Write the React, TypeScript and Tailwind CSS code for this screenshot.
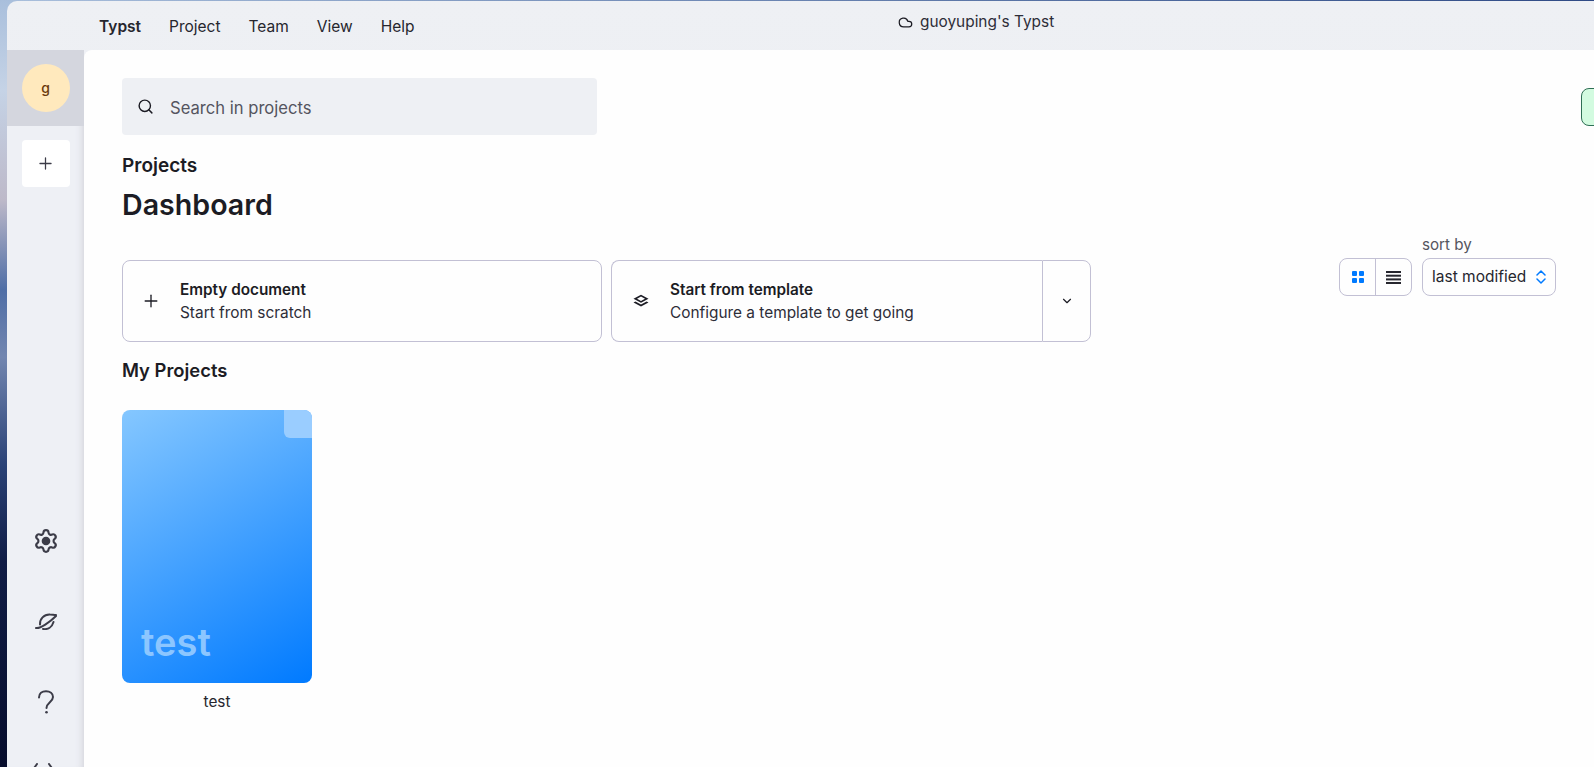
import { ChevronDown, Cloud, Plus, Search, Settings } from 'lucide-react';

const font = { fontFamily: 'Inter, sans-serif' };

function Card({ icon, title, sub, className }: { icon: React.ReactNode; title: string; sub: string; className: string }) {
  return (
    <div className={`flex items-center h-[82px] rounded-lg border border-[#c2c0d4] ${className}`}>
      <div className="w-[16px] flex justify-center mr-[21px]">{icon}</div>
      <div>
        <div className="text-[15.3px] leading-[23px] font-semibold text-[#1c1c24]">{title}</div>
        <div className="text-[15.4px] leading-[23px] text-[#2d2d38]">{sub}</div>
      </div>
    </div>
  );
}

function LayersIcon() {
  return (
    <svg width="16" height="16" viewBox="0 0 16 16" fill="#1c1c24">
      <path d="M8 1.800 15.500 5.800 8 9.800 .5 5.800ZM8 3.600 4 5.800 8 8 12 5.800Z" fillRule="evenodd" />
      <path d="M2.400 8.400 8 11.400l5.600-3L15.500 9.500 8 13.500 .5 9.500Z" />
    </svg>
  );
}

function GridIcon() {
  return (
    <svg width="12" height="12" viewBox="0 0 12 12" fill="#007aff">
      <rect width="5" height="5" rx="1" />
      <rect x="7" width="5" height="5" rx="1" />
      <rect y="7" width="5" height="5" rx="1" />
      <rect x="7" y="7" width="5" height="5" rx="1" />
    </svg>
  );
}

function ListIcon() {
  return (
    <svg width="15" height="13" viewBox="0 0 15 13" fill="#26262e">
      <rect width="15" height="2" />
      <rect y="3.700" width="15" height="2" />
      <rect y="7.400" width="15" height="2" />
      <rect y="11" width="15" height="2" />
    </svg>
  );
}

function SortIcon() {
  return (
    <svg width="10" height="14" viewBox="0 0 10 14" fill="none" stroke="#007aff" strokeWidth="1.500" strokeLinecap="round" strokeLinejoin="round">
      <path d="M1 5 5 1l4 4" />
      <path d="M1 9l4 4 4-4" />
    </svg>
  );
}

function PlanetIcon() {
  return (
    <svg width="22" height="17" viewBox="0 0 22 17" fill="none" stroke="#3c3c48" strokeWidth="2" strokeLinecap="round" className="shrink-0 mt-[59px]">
      <path d="M1 15c4 1 14-6 20-12" />
      <path d="M5 11.500C4.500 6 9 1.200 15 1.500c2 0 4 .5 6 .5" />
      <path d="M8 16c5 .8 9-2 10.500-7" />
    </svg>
  );
}

function HelpIcon() {
  return (
    <svg width="18" height="24" viewBox="0 0 18 24" fill="none" stroke="#3c3c48" strokeWidth="2" strokeLinecap="round" className="shrink-0 mt-[60px]">
      <path d="M2 7.500C2 3.500 5 1.200 9 1.200s7 2.400 7 5.800c0 5-6.500 5.500-6.500 11" />
      <circle cx="9.500" cy="22.300" r="1.300" fill="#3c3c48" stroke="none" />
    </svg>
  );
}

function CodeIcon() {
  return (
    <svg width="24" height="16" viewBox="0 0 24 16" fill="none" stroke="#3c3c48" strokeWidth="2" strokeLinecap="round" strokeLinejoin="round" className="shrink-0 mt-[49px] -ml-[6px]">
      <path d="M6 1 1 8l5 7" />
      <path d="M18 1l5 7-5 7" />
    </svg>
  );
}

export default function App() {
  return (
    <div
      style={font}
      className="relative h-[767px] w-[1594px] overflow-hidden flex bg-[linear-gradient(180deg,#a9bfdc_0px,#c5d3e6_90px,#bdb9c9_200px,#4f6ea6_290px,#7286b0_357px,#2a4276_465px,#101c45_562px,#060c2c_767px)]"
    >
      <div className="absolute inset-x-0 top-0 h-[1px] bg-gradient-to-r from-[#a9bfdc] to-[#2f4a85]" />
      <div className="w-[7px] shrink-0" />
      <div className="flex-1 min-w-0 flex flex-col mt-[1px] rounded-tl-[10px] bg-gradient-to-b from-[#eef0f4] to-[#e9eaef] overflow-hidden">
        <header className="relative h-[49px] shrink-0 flex items-center pl-[92px] pt-[2px] text-[15.500px] text-[#26262e]">
          <span className="font-semibold mr-[28px]">Typst</span>
          <span className="mr-[28px]">Project</span>
          <span className="mr-[28px]">Team</span>
          <span className="mr-[28px]">View</span>
          <span>Help</span>
          <div className="absolute left-[891px] top-[11px] flex items-center gap-[7px] text-[15.400px] leading-[20px] text-[#2d2d38]">
            <Cloud size={15} strokeWidth={2} className="text-[#1c1c24]" />
            guoyuping's Typst
          </div>
        </header>
        <div className="flex-1 min-h-0 flex bg-[#eef0f5]">
          <aside className="w-[77px] shrink-0 flex flex-col items-center overflow-hidden shadow-[inset_-8px_0_8px_-8px_#c8c8d0]">
            <div className="shrink-0 w-full h-[76px] flex items-center justify-center bg-[#d4d6de]">
              <div className="w-[48px] h-[48px] rounded-full bg-[#ffe9bd] flex items-center justify-center pb-[1px] text-[14px] font-medium text-[#6a3a0c]">
                g
              </div>
            </div>
            <div className="shrink-0 mt-[14px] w-[48px] h-[47px] rounded-[4px] bg-white flex items-center justify-center">
              <Plus size={19} strokeWidth={1.600} className="text-[#3c3c48]" />
            </div>
            <Settings size={26} strokeWidth={2} className="shrink-0 mt-[341px] text-[#3c3c48] [&>circle]:fill-current" />
            <PlanetIcon />
            <HelpIcon />
            <CodeIcon />
          </aside>
          <main className="relative flex-1 min-w-0 rounded-tl-[8px] bg-[#fefefe] pl-[38px] pt-[28px]">
            <div className="w-[475px] h-[57px] rounded-[4px] bg-[#eef0f4] flex items-center pl-[15px]">
              <Search size={17} strokeWidth={2} className="text-[#1c1c24]" />
              <span className="ml-[16px] pt-[3px] text-[16.600px] text-[#55555f]">Search in projects</span>
            </div>
            <div className="mt-[19px] text-[19px] leading-[24px] font-semibold text-[#1c1c24]">Projects</div>
            <h1 className="mt-[11px] text-[28.600px] leading-[32px] font-semibold text-[#1c1c24]">Dashboard</h1>
            <div className="mt-[39px] flex gap-[9px]">
              <Card className="w-[480px] pl-[20px]" icon={<Plus size={20} strokeWidth={1.600} className="shrink-0 text-[#1c1c24]" />} title="Empty document" sub="Start from scratch" />
              <div className="flex h-[82px]">
                <Card className="w-[431px] pl-[21px] rounded-r-none border-r-0" icon={<LayersIcon />} title="Start from template" sub="Configure a template to get going" />
                <div className="w-[49px] rounded-r-lg border border-[#c2c0d4] flex items-center justify-center">
                  <ChevronDown size={14} strokeWidth={2} className="text-[#1c1c24]" />
                </div>
              </div>
            </div>
            <h2 className="mt-[16px] text-[18.400px] leading-[24px] font-semibold text-[#1c1c24]">My Projects</h2>
            <div className="mt-[28px] w-[190px]">
              <div className="relative h-[273px] rounded-lg overflow-hidden bg-[linear-gradient(150deg,#85c7ff,#007aff)]">
                <div className="absolute right-0 top-0 w-[28px] h-[28px] rounded-bl-[6px] bg-[#9acdff]" />
                <div className="absolute left-[19px] bottom-[18px] text-[38px] leading-[46px] font-semibold text-[#8cc6ff]">test</div>
              </div>
              <div className="mt-[9px] text-center text-[15.300px] leading-[20px] text-[#26262e]">test</div>
            </div>
            <div className="absolute left-[1255px] top-[185px] flex items-end gap-[10px]">
              <div className="flex w-[73px] h-[38px] rounded-lg border border-[#c2c0d4]">
                <div className="w-[36px] flex items-center justify-center border-r border-[#c2c0d4]"><GridIcon /></div>
                <div className="flex-1 flex items-center justify-center"><ListIcon /></div>
              </div>
              <div>
                <div className="text-[15.200px] leading-[20px] mb-[3px] text-[#55555f]">sort by</div>
                <div className="w-[134px] h-[38px] rounded-lg border border-[#c2c0d4] flex items-center justify-between pl-[9px] pr-[9px] text-[15.500px] text-[#26262e]">
                  last modified
                  <SortIcon />
                </div>
              </div>
            </div>
            <div className="absolute left-[1497px] top-[38px] w-[30px] h-[38px] rounded-l-lg border border-[#2f6f55] bg-[#d3fbe0]" />
          </main>
        </div>
      </div>
    </div>
  );
}
